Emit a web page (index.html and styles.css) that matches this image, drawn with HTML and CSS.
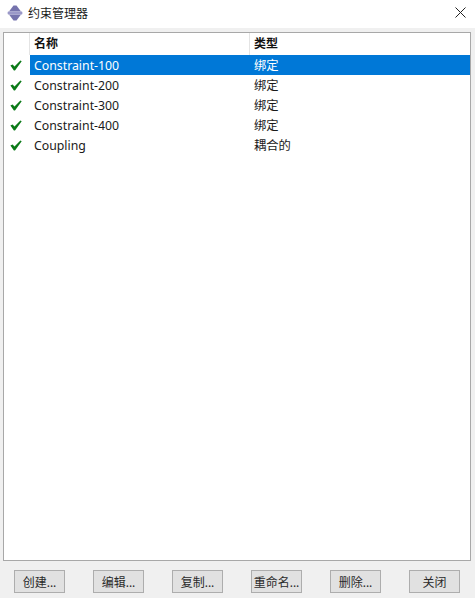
FILE: index.html
```html
<!DOCTYPE html>
<html lang="zh">
<head>
<meta charset="utf-8">
<title>约束管理器</title>
<link rel="stylesheet" href="styles.css">
</head>
<body>
<div class="window">
  <header class="titlebar">
    <svg class="app-icon" width="16" height="16" viewBox="0 0 16 16"><path d="M6.5 .5 H9.5 L14 6.5 H2 Z" fill="#7573ad"/><path d="M6.5 15.5 H9.5 L14 9.5 H2 Z" fill="#7573ad"/><path d="M1 6.5 H15 L15.5 8 L15 9.5 H1 L.5 8 Z" fill="#9a98c8"/></svg>
    <span class="title">约束管理器</span>
    <svg class="close" width="11" height="11" viewBox="0 0 11 11"><path d="M.5 .5 L10.5 10.5 M10.5 .5 L.5 10.5" stroke="#222" stroke-width="1" fill="none"/></svg>
  </header>
  <main class="panel">
    <div class="row head">
      <div class="cell status"></div>
      <div class="cell name">名称</div>
      <div class="cell type">类型</div>
    </div>
    <div class="row selected">
      <div class="cell status"><svg class="check" width="12" height="11" viewBox="0 0 12 11"><path d="M.4 5.6 L2.6 4.4 L4.5 6.6 L10.4 .4 L11.7 1.2 L5 10.6 H3.9 Z" fill="#0b7a18"/></svg></div>
      <div class="cell name">Constraint-100</div>
      <div class="cell type">绑定</div>
    </div>
    <div class="row">
      <div class="cell status"><svg class="check" width="12" height="11" viewBox="0 0 12 11"><path d="M.4 5.6 L2.6 4.4 L4.5 6.6 L10.4 .4 L11.7 1.2 L5 10.6 H3.9 Z" fill="#0b7a18"/></svg></div>
      <div class="cell name">Constraint-200</div>
      <div class="cell type">绑定</div>
    </div>
    <div class="row">
      <div class="cell status"><svg class="check" width="12" height="11" viewBox="0 0 12 11"><path d="M.4 5.6 L2.6 4.4 L4.5 6.6 L10.4 .4 L11.7 1.2 L5 10.6 H3.9 Z" fill="#0b7a18"/></svg></div>
      <div class="cell name">Constraint-300</div>
      <div class="cell type">绑定</div>
    </div>
    <div class="row">
      <div class="cell status"><svg class="check" width="12" height="11" viewBox="0 0 12 11"><path d="M.4 5.6 L2.6 4.4 L4.5 6.6 L10.4 .4 L11.7 1.2 L5 10.6 H3.9 Z" fill="#0b7a18"/></svg></div>
      <div class="cell name">Constraint-400</div>
      <div class="cell type">绑定</div>
    </div>
    <div class="row">
      <div class="cell status"><svg class="check" width="12" height="11" viewBox="0 0 12 11"><path d="M.4 5.6 L2.6 4.4 L4.5 6.6 L10.4 .4 L11.7 1.2 L5 10.6 H3.9 Z" fill="#0b7a18"/></svg></div>
      <div class="cell name">Coupling</div>
      <div class="cell type">耦合的</div>
    </div>
  </main>
  <footer class="actions">
    <button class="btn">创建...</button>
    <button class="btn">编辑...</button>
    <button class="btn">复制...</button>
    <button class="btn">重命名...</button>
    <button class="btn">删除...</button>
    <button class="btn">关闭</button>
  </footer>
</div>
</body>
</html>
```
FILE: styles.css
```css
* { box-sizing: border-box; }
html, body { margin: 0; padding: 0; }
body {
  width: 475px;
  height: 598px;
  overflow: hidden;
  font-family: "Noto Sans", "Noto Sans CJK SC", sans-serif;
  font-size: 12.3px;
  color: #1a1a1a;
}
.window {
  display: flex;
  flex-direction: column;
  height: 598px;
  background: #f0f0f0;
}
.titlebar {
  display: flex;
  align-items: center;
  height: 28px;
  padding: 0 9px 3px 7px;
  background: #fff;
  flex: none;
}
.app-icon { flex: none; }
.title {
  margin-left: 5px;
  font-size: 12px;
  flex: 1;
}
.panel {
  margin: 4px 4px 0 3px;
  height: 529px;
  flex: none;
  background: #fff;
  border: 1px solid #a8a8a8;
}
.row {
  display: flex;
  height: 20px;
  line-height: 22px;
}
.row.head {
  height: 22px;
  line-height: 22px;
  font-weight: 700;
  font-size: 12px;
  color: #111;
}
.cell { white-space: nowrap; }
.status {
  width: 26px;
  flex: none;
  display: flex;
  align-items: center;
  padding-left: 6px;
}
.head .status { width: 25px; }
.name {
  width: 220px;
  flex: none;
  padding-left: 4px;
}
.type {
  flex: 1;
  padding-left: 4px;
}
.head .name, .head .type { border-left: 1px solid #e4e4e4; }
.selected .name, .selected .type {
  background: #0078d7;
  color: #fff;
}
.actions {
  display: flex;
  gap: 28px;
  padding: 9px 0 0 14px;
}
.btn {
  width: 51px;
  height: 23px;
  padding: 0;
  font: inherit;
  font-size: 12px;
  color: #2a2a2a;
  background: #e1e1e1;
  border: 1px solid #adadad;
  border-radius: 0;
  white-space: nowrap;
}
```
